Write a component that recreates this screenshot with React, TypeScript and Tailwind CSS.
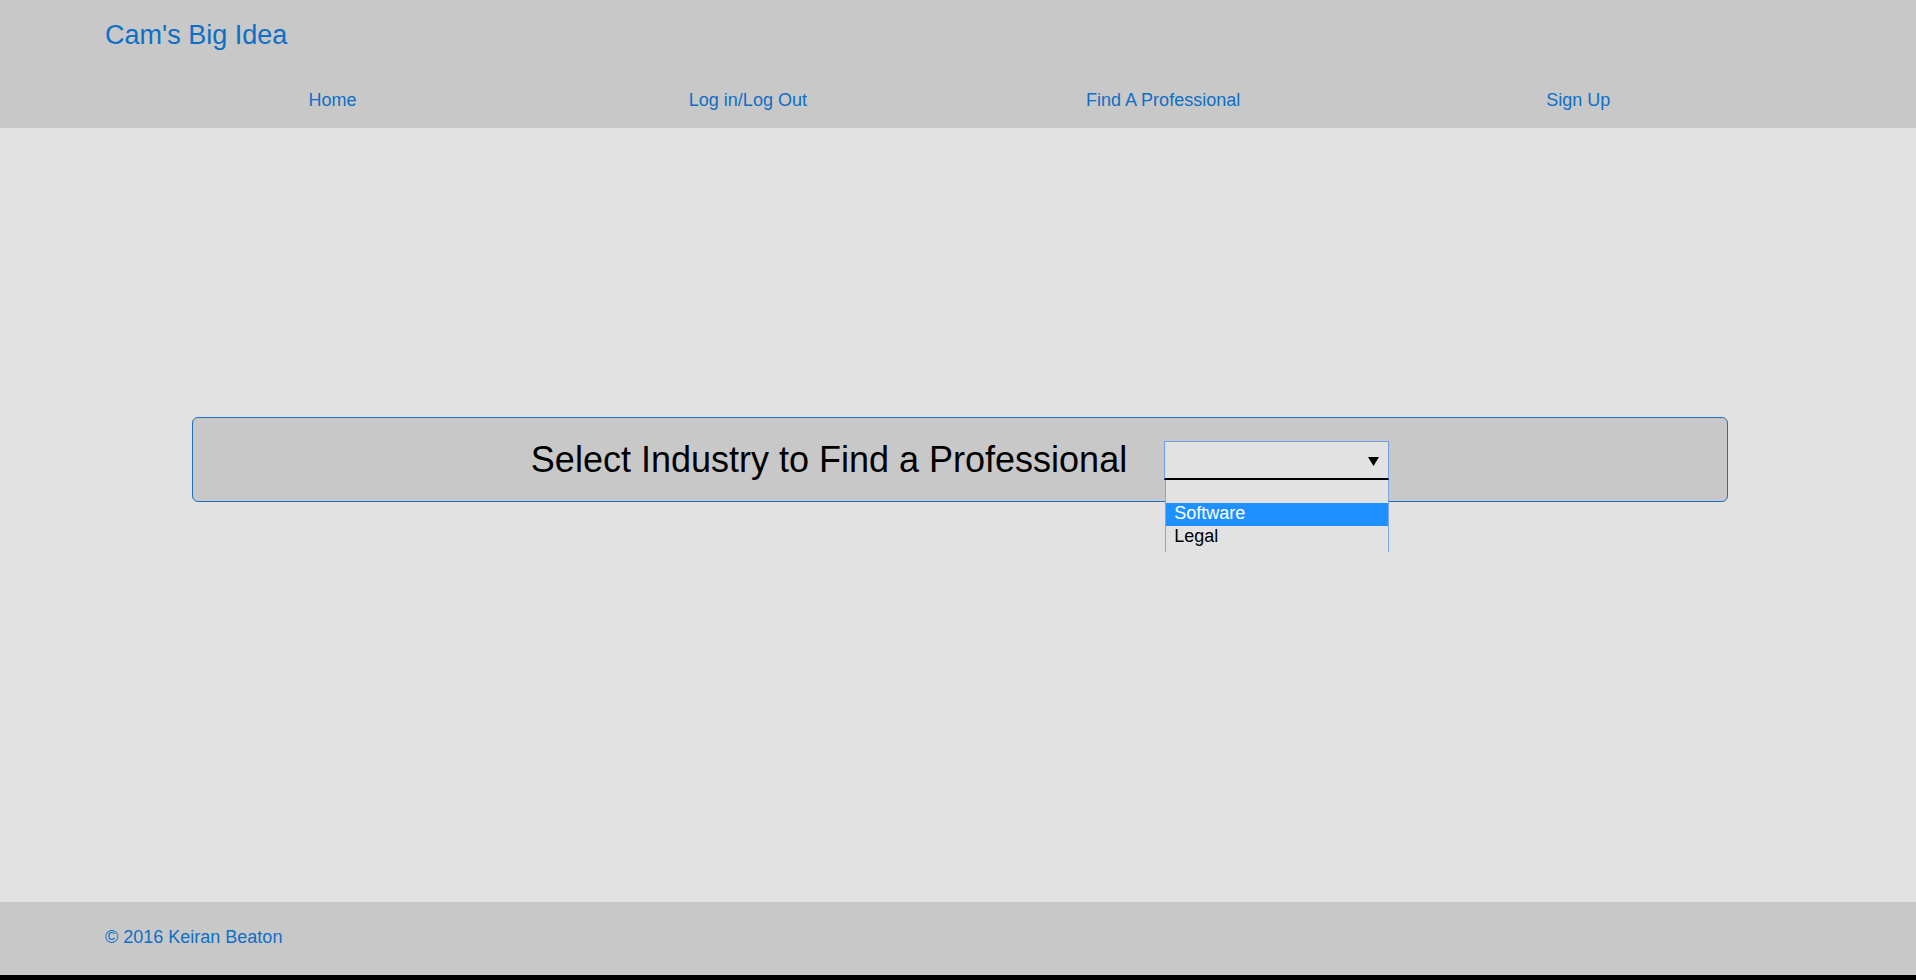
import React from "react";

const NAV = ["Home", "Log in/Log Out", "Find A Professional", "Sign Up"];
const OPTIONS = ["", "Software", "Legal"];

export default function App() {
  return (
    <div className="h-[980px] flex flex-col bg-[#e2e2e2] font-['Liberation_Sans',Arial,sans-serif] border-b-[5px] border-black">
      {/* header */}
      <header className="h-[128px] shrink-0 bg-[#c8c8c8]">
        <div className="ml-[105px] pt-[17px] text-[27px] leading-[36px] text-[#0e6fc7]">
          Cam's Big Idea
        </div>
        <nav className="ml-[125px] w-[1661px] mt-[35px] grid grid-cols-4 text-center text-[18px] leading-[24px] text-[#0e6fc7]">
          {NAV.map((n) => (
            <a key={n} className="cursor-pointer">
              {n}
            </a>
          ))}
        </nav>
      </header>

      {/* main */}
      <main className="flex-1 pt-[289px]">
        <div className="ml-[192px] w-[1536px] h-[85px] rounded-[6px] border border-[#1d70c1] bg-[#c8c8c8] flex items-center justify-center gap-[37px]">
          <h1 className="text-[36px] leading-[40px] text-black">
            Select Industry to Find a Professional
          </h1>
          <div className="relative w-[225px] h-[39px] mt-[1px] bg-[#e2e2e2] border-x border-t border-[#6c9fec] border-b-2 border-b-black">
            <svg
              className="absolute right-[9px] top-[15px]"
              width="11"
              height="9"
              viewBox="0 0 11 9"
            >
              <polygon points="0,0 11,0 5.5,9" fill="#000" />
            </svg>
            <ul className="absolute left-0 top-[38px] w-[224px] h-[72px] overflow-hidden bg-[#e2e2e2] border-x border-[#7aa6ec] text-[18px] leading-[20px] text-black">
              {OPTIONS.map((o, i) => (
                <li
                  key={i}
                  className={`h-[23px] px-[8px] ${
                    o === "Software" ? "bg-[#1e90ff] text-white" : ""
                  }`}
                >
                  {o}
                </li>
              ))}
            </ul>
          </div>
        </div>
      </main>

      {/* footer */}
      <footer className="h-[73px] shrink-0 bg-[#c8c8c8] pt-[23px]">
        <p className="ml-[105px] text-[18px] leading-[24px] text-[#0e6fc7]">
          © 2016 Keiran Beaton
        </p>
      </footer>
    </div>
  );
}
